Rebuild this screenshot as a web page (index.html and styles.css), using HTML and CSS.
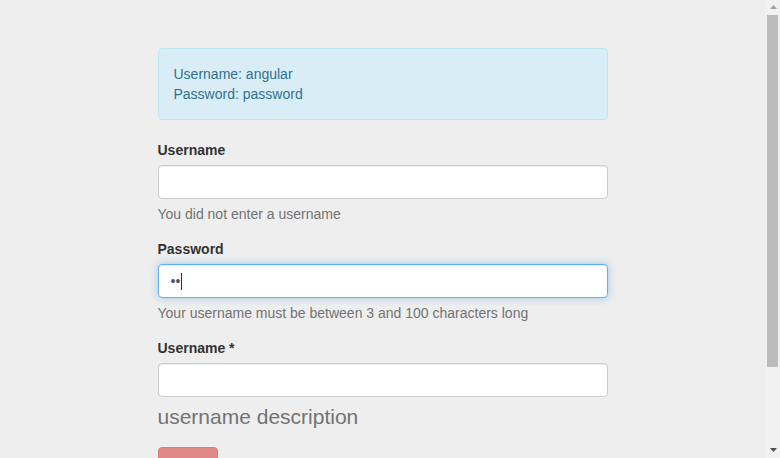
FILE: index.html
```html
<!DOCTYPE html>
<html>
<head>
<meta charset="utf-8">
<link rel="stylesheet" href="styles.css">
</head>
<body>
<main class="page">
  <div class="container">
    <div class="alert">
      Username: angular<br>
      Password: password
    </div>
    <form class="form">
      <div class="form-group">
        <label class="label">Username</label>
        <input class="form-control" type="text">
        <p class="help-block">You did not enter a username</p>
      </div>
      <div class="form-group">
        <label class="label">Password</label>
        <div class="field">
          <input class="form-control is-focused" type="password" value="ab">
          <span class="caret"></span>
        </div>
        <p class="help-block">Your username must be between 3 and 100 characters long</p>
      </div>
      <div class="form-group form-group-last">
        <label class="label">Username *</label>
        <input class="form-control" type="text">
        <p class="lead">username description</p>
      </div>
      <button class="btn btn-danger" type="submit" disabled>Login</button>
    </form>
  </div>
</main>
<div class="scrollbar">
  <svg class="arrow" width="15" height="15" viewBox="0 0 15 15"><polygon points="5,9 8.5,5 12,9" fill="#a3a3a3"/></svg>
  <div class="thumb"></div>
  <div class="track-rest"></div>
  <svg class="arrow" width="15" height="15" viewBox="0 0 15 15"><polygon points="5,5 12,5 8.5,9" fill="#505050"/></svg>
</div>
</body>
</html>
```
FILE: styles.css
```css
html, body {
  margin: 0;
  padding: 0;
}
body {
  display: flex;
  height: 100vh;
  overflow: hidden;
  background: #eeeeee;
  font-family: "Liberation Sans", Arial, Helvetica, sans-serif;
  font-size: 14px;
  line-height: 1.42857143;
  color: #333333;
}
.page {
  flex: 1;
  min-width: 0;
  overflow: hidden;
}
.scrollbar {
  width: 15px;
  flex: none;
  display: flex;
  flex-direction: column;
  background: #f1f1f1;
}
.arrow {
  display: block;
  flex: none;
}
.thumb {
  flex: none;
  width: 11px;
  height: 352px;
  margin-left: 2px;
  background: #bcbcbc;
}
.track-rest {
  flex: 1;
}
.container {
  width: 450px;
  margin: 0 auto;
  padding: 48px 0 76px;
}
.alert {
  padding: 15px;
  margin-bottom: 20px;
  border: 1px solid #bce8f1;
  border-radius: 4px;
  background: #d9edf7;
  color: #31708f;
}
.form-group {
  margin-bottom: 15px;
}
.form-group-last {
  margin-bottom: 16px;
}
.label {
  display: block;
  font-weight: bold;
  margin-bottom: 5px;
}
.field {
  position: relative;
}
.form-control {
  display: block;
  box-sizing: border-box;
  width: 100%;
  height: 34px;
  padding: 6px 12px;
  margin: 0;
  font-family: inherit;
  font-size: 14px;
  line-height: 1.42857143;
  color: #555555;
  background: #ffffff;
  border: 1px solid #cccccc;
  border-radius: 4px;
  box-shadow: inset 0 1px 1px rgba(0,0,0,.075);
  outline: none;
}
.form-control.is-focused {
  border-color: #66afe9;
  box-shadow: inset 0 1px 1px rgba(0,0,0,.075), 0 0 8px rgba(102,175,233,.6);
}
.caret {
  position: absolute;
  left: 23px;
  top: 9px;
  width: 1px;
  height: 17px;
  background: #333333;
}
.help-block {
  display: block;
  margin: 5px 0 10px;
  color: #737373;
}
.lead {
  margin: 5px 0 10px;
  font-size: 21px;
  line-height: 1.4;
  font-weight: 300;
  color: #737373;
}
.btn {
  display: inline-block;
  padding: 6px 12px;
  font-family: inherit;
  font-size: 14px;
  line-height: 1.42857143;
  border: 1px solid transparent;
  border-radius: 4px;
}
.btn-danger {
  color: #ffffff;
  background: #d9534f;
  border-color: #d43f3a;
  opacity: .65;
}
```
